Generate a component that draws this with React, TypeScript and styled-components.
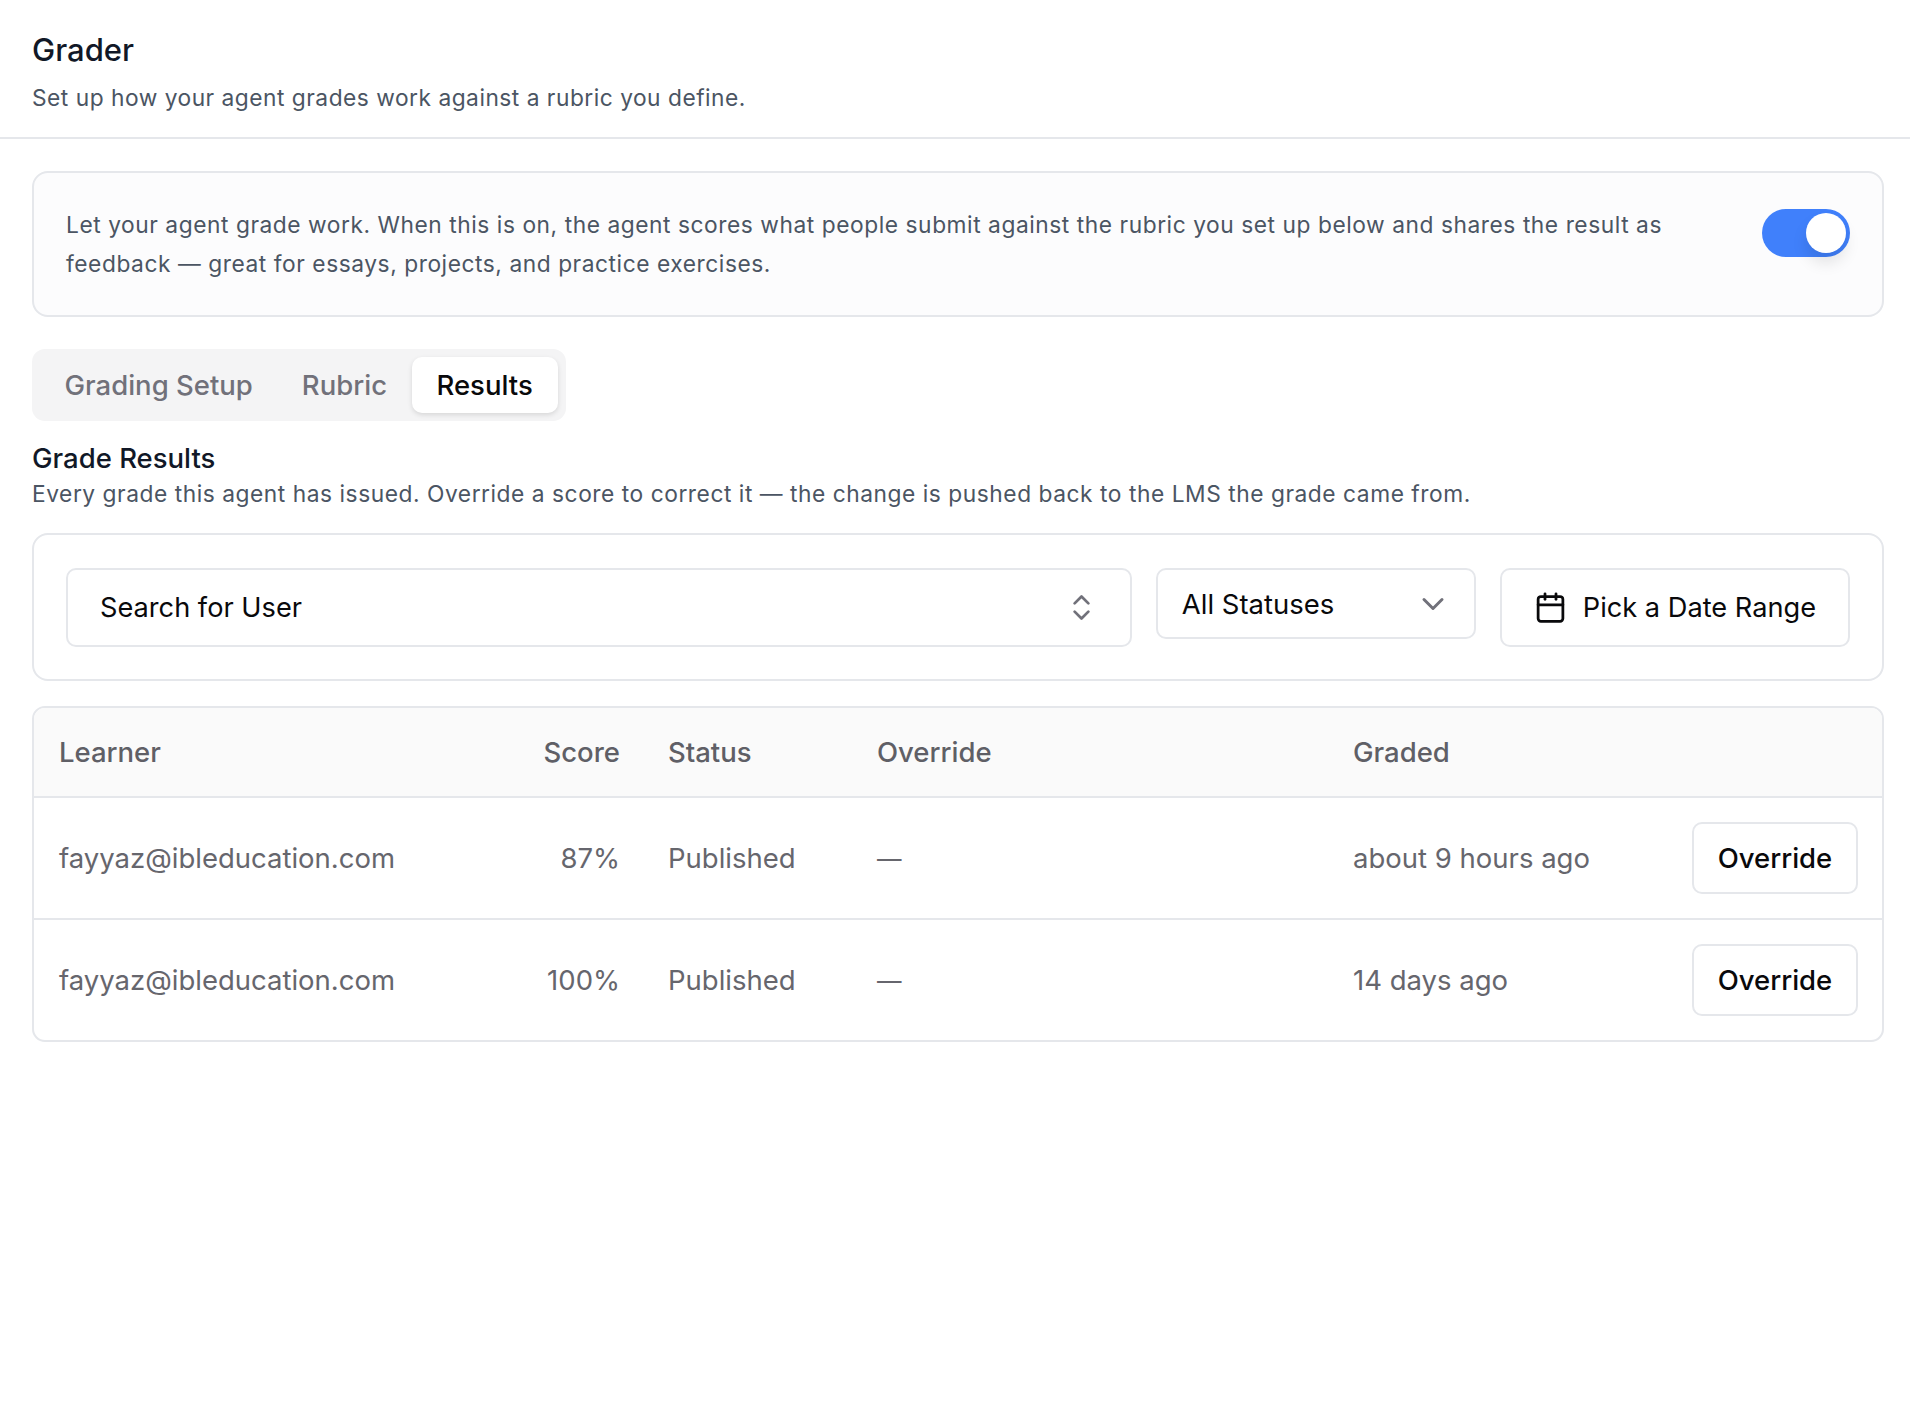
import React from "react";
import styled, { createGlobalStyle } from "styled-components";
import { Calendar, ChevronDown, ChevronsUpDown } from "lucide-react";

const Global = createGlobalStyle`
  * { box-sizing: border-box; }
  html, body { margin: 0; padding: 0; background: #fff; }
  body { font-family: Inter, "Liberation Sans", sans-serif; color: #09090b; }
`;

const Page = styled.main`
  width: 1910px;
  min-height: 1404px;
`;

const Header = styled.header`
  height: 139px;
  padding: 32px 32px 0;
  border-bottom: 2px solid #e5e7eb;
`;

const Title = styled.h1`
  margin: 0;
  font-size: 31px;
  line-height: 36px;
  font-weight: 500;
  color: #111827;
`;

const Subtitle = styled.p`
  margin: 12px 0 0;
  font-size: 22.75px;
  line-height: 36px;
  letter-spacing: 0.5px;
  color: #4b5563;
`;

const Content = styled.div`
  padding: 32px 26px 0 32px;
  display: flex;
  flex-direction: column;
`;

const Notice = styled.section`
  height: 146px;
  padding: 32px;
  display: flex;
  justify-content: space-between;
  border: 2px solid #e5e7eb;
  border-radius: 16px;
  background: #fcfcfd;
`;

const NoticeText = styled.p`
  margin: 0;
  width: 1640px;
  font-size: 22.75px;
  line-height: 39px;
  letter-spacing: 0.55px;
  color: #4b5563;
`;

const Toggle = styled.span`
  flex: none;
  width: 88px;
  height: 48px;
  margin-top: 4px;
  padding: 4px;
  display: flex;
  justify-content: flex-end;
  border-radius: 24px;
  background: #4080fb;
`;

const Thumb = styled.span`
  width: 40px;
  height: 40px;
  border-radius: 50%;
  background: #fff;
  box-shadow: 0 10px 15px rgba(0, 0, 0, 0.1);
`;

const Tabs = styled.nav`
  align-self: flex-start;
  margin-top: 32px;
  height: 72px;
  padding: 8px;
  display: flex;
  border-radius: 13px;
  background: #f4f4f5;
`;

const Tab = styled.span<{ $active?: boolean }>`
  padding: 0 ${(p) => (p.$active ? "25px" : "24.5px")};
  display: flex;
  align-items: center;
  border-radius: 10px;
  font-size: 27.5px;
  font-weight: 500;
  color: ${(p) => (p.$active ? "#09090b" : "#71717a")};
  background: ${(p) => (p.$active ? "#fff" : "transparent")};
  box-shadow: ${(p) => (p.$active ? "0 2px 5px rgba(0,0,0,0.12)" : "none")};
`;

const SectionTitle = styled.h2`
  margin: 21px 0 0;
  font-size: 27.5px;
  line-height: 32px;
  font-weight: 500;
  color: #111827;
`;

const SectionText = styled.p`
  margin: 2px 0 0;
  font-size: 22.75px;
  line-height: 36px;
  letter-spacing: 0.54px;
  color: #4b5563;
`;

const Filters = styled.section`
  margin-top: 21px;
  height: 148px;
  padding: 33px 32px 0;
  display: flex;
  align-items: flex-start;
  gap: 24px;
  border: 2px solid #e5e7eb;
  border-radius: 16px;
`;

const Field = styled.div<{ $grow?: boolean; $short?: boolean }>`
  flex: ${(p) => (p.$grow ? "1" : "none")};
  height: ${(p) => (p.$short ? "71px" : "79px")};
  width: ${(p) => (p.$short ? "320px" : "auto")};
  padding: ${(p) => (p.$short ? "0 23px 0 24px" : "0 32px")};
  display: flex;
  align-items: center;
  justify-content: space-between;
  gap: 17px;
  border: 2px solid #e5e7eb;
  border-radius: 10px;
  font-size: ${(p) => (p.$short ? "27.5px" : "27.2px")};
  color: #09090b;
  svg { flex: none; }
`;

const DateLabel = styled.div`
  display: flex;
  align-items: center;
  gap: 16px;
`;

const TableWrap = styled.section`
  margin-top: 25px;
  border: 2px solid #e5e7eb;
  border-radius: 13px;
  overflow: hidden;
`;

const Table = styled.table`
  width: 100%;
  border-collapse: collapse;
  table-layout: fixed;
  font-size: 27.5px;
`;

const HeadRow = styled.tr`
  height: 89px;
  background: #fafafa;
  border-bottom: 2px solid #e5e7eb;
`;

const Th = styled.th<{ $right?: boolean }>`
  padding: ${(p) => (p.$right ? "0 23px 0 25px" : "0 25px")};
  font-weight: 500;
  color: #5f5f66;
  text-align: ${(p) => (p.$right ? "right" : "left")};
`;

const Row = styled.tr`
  height: 122px;
  & + & { height: 121px; border-top: 2px solid #e5e7eb; }
`;

const Td = styled.td<{ $right?: boolean }>`
  padding: ${(p) => (p.$right ? "0 23px 0 25px" : "0 25px")};
  color: #66666d;
  text-align: ${(p) => (p.$right ? "right" : "left")};
`;

const Dash = styled.span`
  font-size: 24.5px;
`;

const GradedCell = styled.div`
  display: flex;
  align-items: center;
  justify-content: space-between;
  margin-right: -1px;
`;

const Button = styled.button`
  height: 72px;
  width: 166px;
  padding: 0;
  border: 2px solid #e5e7eb;
  border-radius: 10px;
  background: #fff;
  font: 500 27.5px Inter, sans-serif;
  color: #09090b;
`;

const rows = [
  { score: "87%", graded: "about 9 hours ago" },
  { score: "100%", graded: "14 days ago" },
];

export default function App() {
  return (
    <Page>
      <Global />
      <Header>
        <Title>Grader</Title>
        <Subtitle>Set up how your agent grades work against a rubric you define.</Subtitle>
      </Header>
      <Content>
        <Notice>
          <NoticeText>
            Let your agent grade work. When this is on, the agent scores what people submit against the rubric you set up below and shares the result as feedback — great for essays, projects, and practice exercises.
          </NoticeText>
          <Toggle><Thumb /></Toggle>
        </Notice>
        <Tabs>
          <Tab>Grading Setup</Tab>
          <Tab>Rubric</Tab>
          <Tab $active>Results</Tab>
        </Tabs>
        <SectionTitle>Grade Results</SectionTitle>
        <SectionText>Every grade this agent has issued. Override a score to correct it — the change is pushed back to the LMS the grade came from.</SectionText>
        <Filters>
          <Field $grow>
            Search for User
            <ChevronsUpDown size={33} color="#71717a" strokeWidth={2} />
          </Field>
          <Field $short>
            All Statuses
            <ChevronDown size={36} color="#71717a" strokeWidth={2} />
          </Field>
          <Field>
            <DateLabel>
              <Calendar size={33} color="#09090b" strokeWidth={2} />
              Pick a Date Range
            </DateLabel>
          </Field>
        </Filters>
        <TableWrap>
          <Table>
            <colgroup>
              <col />
              <col width="128" />
              <col width="209" />
              <col width="476" />
              <col width="554" />
            </colgroup>
            <thead>
              <HeadRow>
                <Th>Learner</Th>
                <Th $right>Score</Th>
                <Th>Status</Th>
                <Th>Override</Th>
                <Th>Graded</Th>
              </HeadRow>
            </thead>
            <tbody>
              {rows.map((r) => (
                <Row key={r.score}>
                  <Td>fayyaz@ibleducation.com</Td>
                  <Td $right>{r.score}</Td>
                  <Td>Published</Td>
                  <Td><Dash>—</Dash></Td>
                  <Td>
                    <GradedCell>
                      {r.graded}
                      <Button>Override</Button>
                    </GradedCell>
                  </Td>
                </Row>
              ))}
            </tbody>
          </Table>
        </TableWrap>
      </Content>
    </Page>
  );
}
